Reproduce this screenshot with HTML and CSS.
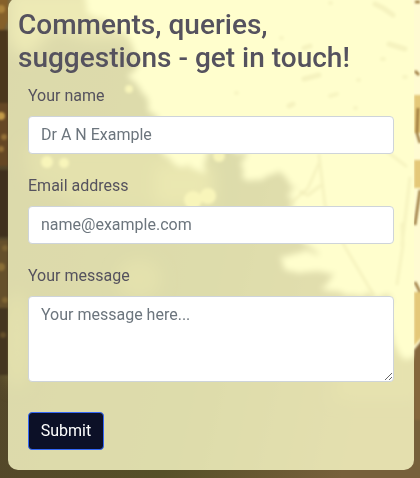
FILE: index.html
```html
<!DOCTYPE html>
<html lang="en">
<head>
<meta charset="utf-8">
<title>Get in touch</title>
<link rel="stylesheet" href="styles.css">
</head>
<body>
<svg class="backdrop" viewBox="0 0 420 478" preserveAspectRatio="none" aria-hidden="true" color-interpolation-filters="sRGB">
  <defs>
    <linearGradient id="ground" x1="0" y1="0" x2="1" y2="0.25">
      <stop offset="0" stop-color="#52432a"/><stop offset="0.6" stop-color="#565028"/><stop offset="1" stop-color="#77603b"/>
    </linearGradient>
    <filter id="soft" x="-30%" y="-30%" width="160%" height="160%"><feGaussianBlur stdDeviation="8"/></filter>
    <filter id="edge" x="-20%" y="-20%" width="140%" height="140%">
      <feTurbulence type="fractalNoise" baseFrequency="0.06" numOctaves="3" seed="8" result="n"/>
      <feDisplacementMap in="SourceGraphic" in2="n" scale="15" xChannelSelector="R" yChannelSelector="G"/>
      <feGaussianBlur stdDeviation="3.2"/>
    </filter>
    <filter id="fine" x="-20%" y="-20%" width="140%" height="140%"><feGaussianBlur stdDeviation="1.7"/></filter>
    <filter id="tiny" x="-40%" y="-20%" width="180%" height="140%"><feGaussianBlur stdDeviation="1"/></filter>
  </defs>
  <rect width="420" height="478" fill="url(#ground)"/>
  <g filter="url(#soft)">
    <path d="M8 -10H240V80H150L125 38L85 38L55 28L25 60L8 40Z" fill="#d2c07a" opacity=".65"/>
    <path d="M25 145H190L210 165L216 204L170 214L80 204L30 180Z" fill="#8b7d3a" opacity=".65"/>
    <path d="M155 165H214V204H155Z" fill="#b5a456" opacity=".55"/>
    <ellipse cx="139" cy="279" rx="22" ry="20" fill="#8f8140" opacity=".6"/>
    <ellipse cx="17" cy="340" rx="14" ry="48" fill="#8a7a3a" opacity=".6"/>
    <path d="M345 362L420 330V400H330Z" fill="#8f7f40" opacity=".55"/>
  </g>
  <g filter="url(#edge)">
    <path d="M85 -22H440V340L410 362L390 347L392 297H365L346 294L320 286L332 276L284 270L282 258L294 252L325 255L306 246L291 235L286 208L295 189L279 171L266 178L244 179L239 165L246 151L210 149L204 175L177 165L161 153L158 115L139 91L133 77L141 61L125 33L107 24L88 12Z" fill="#fffbd2"/>
  </g>
  <g filter="url(#fine)">
    <g fill="#ddcd76">
      <circle cx="47" cy="162" r="6"/><circle cx="64" cy="163" r="5"/>
      <circle cx="193" cy="200" r="9"/><circle cx="208" cy="196" r="8"/><circle cx="219" cy="156" r="6"/><circle cx="129" cy="89" r="4"/>
    </g>
    <g fill="none" stroke="#a9935a" stroke-linecap="round">
      <g stroke-width="5" opacity=".6">
        <path d="M375 4L383 8L393 15M389 44L405 49M304 79L319 75M304 48L310 46M289 106L293 104"/>
      </g>
      <g stroke-width="4" opacity=".5">
        <path d="M382 59h2M404 77h2M236 93h1M358 80h1M330 96l7-2M355 108h1M301 192l7 3l12-9M330 3h1M281 38h1"/>
      </g>
      <g stroke-width="3" opacity=".55">
        <path d="M319 155L325 205L345 247L373 294M291 203L308 188L319 163M402 224L403 245L397 284M385 150L406 166M410 178L402 245"/>
      </g>
    </g>
  </g>
  <g filter="url(#tiny)">
    <path d="M-4 -4H8V20L4 30H-4Z" fill="#85602a"/>
    <path d="M-4 30H8V103H-4Z" fill="#4b371c"/>
    <path d="M-4 103H8V166H-4Z" fill="#654724"/>
    <path d="M-4 170H8V237H-4Z" fill="#3f301d"/>
    <path d="M-4 240H8V308H-4Z" fill="#65502b"/>
    <path d="M-4 308H8V375H-4Z" fill="#443620"/>
    <g fill="#c39a47">
      <circle cx="1" cy="9" r="4" opacity=".6"/><circle cx="1" cy="116" r="4"/><circle cx="4" cy="137" r="3" opacity=".5"/><circle cx="1" cy="149" r="3" opacity=".5"/>
      <circle cx="5" cy="248" r="3" opacity=".25"/><circle cx="1" cy="267" r="4" opacity=".4"/><circle cx="5" cy="300" r="3" opacity=".3"/><circle cx="3" cy="335" r="3" opacity=".25"/>
    </g>
    <path d="M414 95h8v38h-8zM414 160h8v28h-8zM414 292h8v45l-8 9z" fill="#e4c878"/>
    <path d="M415 2h5M415 71l4 4M418 108l-1 25l3 10M420 190l-5 35M415 282l5 10" fill="none" stroke="#967338" stroke-width="2.5"/>
    <path d="M414 350l8-10v80h-8z" fill="#84663c"/>
  </g>
</svg>
<main class="contact">
  <h3 class="contact-title">Comments, queries, suggestions - get in touch!</h3>
  <form class="contact-form">
    <div class="field">
      <label for="name">Your name</label>
      <input class="control" id="name" type="text" placeholder="Dr A N Example">
    </div>
    <div class="field">
      <label for="email">Email address</label>
      <input class="control" id="email" type="email" placeholder="name@example.com">
    </div>
    <div class="field">
      <label for="message">Your message</label>
      <textarea class="control" id="message" rows="3" placeholder="Your message here..."></textarea>
    </div>
    <button class="submit" type="button">Submit</button>
  </form>
</main>
</body>
</html>
```
FILE: styles.css
```css
* { box-sizing: border-box; }

body {
  margin: 0;
  height: 478px;
  overflow: hidden;
  font: 400 16px/1.5 Roboto, sans-serif;
  color: #55525e;
}

.backdrop {
  position: absolute;
  inset: 0;
  z-index: -1;
  width: 420px;
  height: 478px;
}

.contact {
  width: 406px;
  height: 472px;
  margin: -2px 0 0 8px;
  padding: 9.8px 10px 20px;
  border-radius: 10px;
  background: rgba(255, 255, 204, .8);
}

.contact-title {
  margin: 0 0 9px;
  font-size: 28px;
  font-weight: 500;
  line-height: 1.2;
}

.contact-form { padding: 0 10px; }

.field { margin-bottom: 20px; }

.field label {
  display: block;
  margin-bottom: 8px;
}

.control {
  display: block;
  width: 100%;
  height: 38px;
  padding: 6px 12px;
  border: 1px solid #ced4da;
  border-radius: 4px;
  background: #fff;
  font: inherit;
  color: #495057;
}

textarea.control {
  height: 86px;
  resize: vertical;
}

.control::placeholder {
  color: #6c757d;
  opacity: 1;
}

.submit {
  display: block;
  width: 76px;
  height: 38px;
  margin-top: 30px;
  padding: 6px 0;
  border: 1px solid #3366f5;
  border-radius: 4px;
  background: #0c1027;
  color: #fff;
  font: inherit;
}
```
